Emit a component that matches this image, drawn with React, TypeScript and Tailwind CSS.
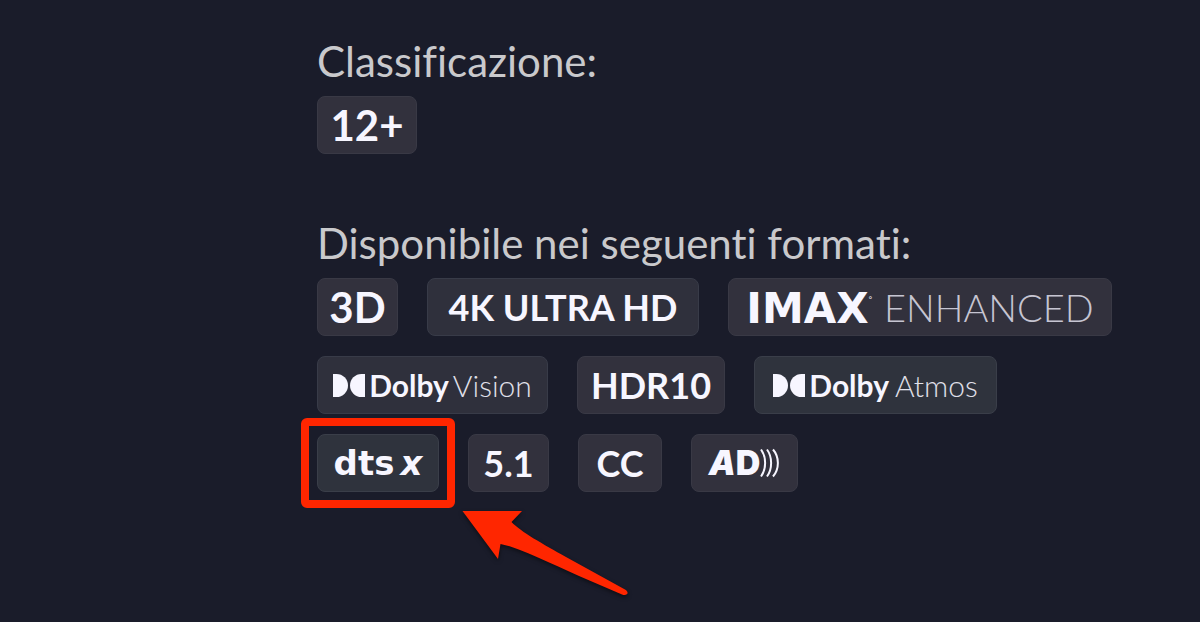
import clsx from "clsx";
import type { ReactNode } from "react";

const TONES = {
  plum: "border-[#393945] bg-[#32313d]",
  slate: "border-[#383b48] bg-[#2f303c]",
  steel: "border-[#3a3e49] bg-[#2f333d]",
};

function Badge({
  tone = "plum",
  className,
  children,
}: {
  tone?: keyof typeof TONES;
  className?: string;
  children: ReactNode;
}) {
  return (
    <li
      className={clsx(
        "relative flex h-[58px] items-center justify-center whitespace-nowrap rounded-lg border leading-none text-[#f7f6ff]",
        TONES[tone],
        className,
      )}
    >
      {children}
    </li>
  );
}

function Heading({ children }: { children: ReactNode }) {
  return (
    <h2 className="text-[42px] leading-[50px] text-[#c9c9cc]">{children}</h2>
  );
}

function DolbyMark() {
  return (
    <svg
      viewBox="0 0 32 23"
      className="mr-1 h-[23px] w-8 shrink-0"
      fill="currentColor"
      aria-hidden
    >
      <path d="M0 0h3.5a11.5 11.5 0 0 1 0 23H0z" />
      <path d="M32 0h-3.5a11.5 11.5 0 0 0 0 23H32z" />
    </svg>
  );
}

function SoundWaves() {
  return (
    <svg
      viewBox="0 0 20 30"
      className="h-[30px] w-5 shrink-0"
      fill="none"
      stroke="currentColor"
      strokeWidth="2"
      aria-hidden
    >
      <path d="M1 1.5C6.5 9 6.5 21 1 28.5" />
      <path d="M7 1.5C12.5 9 12.5 21 7 28.5" />
      <path d="M13 1.5C19.5 9 19.5 21 13 28.5" />
    </svg>
  );
}

/* red frame and arrow drawn over the DTS:X badge */
function Callout() {
  return (
    <div aria-hidden className="pointer-events-none">
      <div className="absolute -inset-[17px] rounded-md border-8 border-[#ff2600]" />
      <svg
        viewBox="0 0 168 88"
        className="absolute top-[74px] left-[143px] h-[88px] w-[168px] drop-shadow-[0_2px_2px_rgba(0,0,0,0.5)]"
        fill="#ff2600"
      >
        <path d="M1.5 2H61L50.5 13C60 23 82 35 105 48L164 80.5C169 83.5 166 87.5 161 85.500L118 67C90 55 62 40 39.5 35L37 50Z" />
      </svg>
    </div>
  );
}

export default function App() {
  return (
    <main className="min-h-screen bg-[#1a1c2a] pt-9 pr-4 pb-16 pl-[317px] font-['Lato','Liberation_Sans',sans-serif] [font-variant-ligatures:none]">
      <section>
        <Heading>Classificazione:</Heading>
        <ul className="mt-2.5 flex">
          <Badge className="w-[100px] text-[42px] font-bold">12+</Badge>
        </ul>
      </section>

      <section className="mt-16">
        <Heading>Disponibile nei seguenti formati:</Heading>
        <ul className="mt-2.5 flex max-w-[800px] flex-wrap gap-x-[29px] gap-y-5">
          <Badge className="w-[81px] text-[42px] font-bold">3D</Badge>
          <Badge tone="slate" className="w-[272px] text-[36px] font-bold">
            4K ULTRA HD
          </Badge>
          <Badge className="w-[384px] text-[38px]">
            <span className="pt-1 font-['DejaVu_Sans'] text-[42px] font-bold">
              IMAX
            </span>
            <span className="mb-4 text-[8px]">°</span>
            <span className="ml-3 font-light text-[#c6c5d2]">ENHANCED</span>
          </Badge>
          <Badge tone="slate" className="w-[231px] text-[30px]">
            <DolbyMark />
            <span className="font-bold">Dolby</span>
            <span className="ml-1 font-light text-[#e0e0ea]">Vision</span>
          </Badge>
          <Badge className="w-[148px] text-[36px] font-bold">HDR10</Badge>
          <Badge tone="steel" className="w-[243px] text-[30px]">
            <DolbyMark />
            <span className="font-bold">Dolby</span>
            <span className="ml-1.5 font-light text-[#e0e0ea]">Atmos</span>
          </Badge>
          <Badge
            tone="steel"
            className="w-[122px] font-['DejaVu_Sans'] text-[34px] font-bold"
          >
            <span>dts</span>
            <span className="ml-1.5 italic">x</span>
            <Callout />
          </Badge>
          <Badge className="w-[81px] text-[36px] font-bold">5.1</Badge>
          <Badge className="w-[84px] text-[36px] font-bold">CC</Badge>
          <Badge className="w-[107px] font-['Inter'] text-[34px] font-black">
            <span className="italic">A</span>
            <span>D</span>
            <SoundWaves />
          </Badge>
        </ul>
      </section>
    </main>
  );
}
